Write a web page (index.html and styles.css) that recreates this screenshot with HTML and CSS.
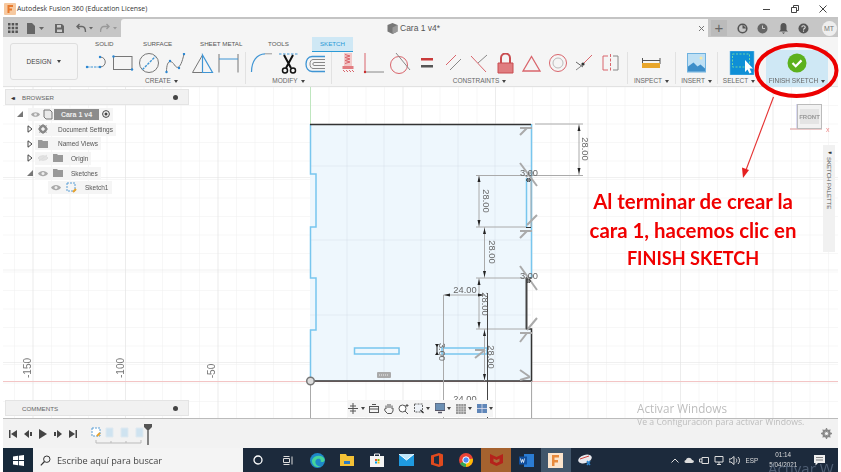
FILE: index.html
```html
<!DOCTYPE html>
<html lang="es">
<head>
<meta charset="utf-8">
<title>Autodesk Fusion 360</title>
<link rel="stylesheet" href="styles.css">
</head>
<body>
<div class="page">
  <header class="titlebar">
    <svg class="applogo" width="12" height="12" viewBox="0 0 12 12"><rect width="12" height="12" rx="1" fill="#f6c9a0"/><path d="M3.500 2h5.500v2H5.500v1.500H8v2H5.500V10h-2z" fill="#e8792b"/></svg>
    <span class="apptitle">Autodesk Fusion 360 (Education License)</span>
    <div class="winctl">
      <svg width="10" height="10" viewBox="0 0 10 10"><path d="M1 5.500h7" stroke="#444" fill="none"/></svg>
      <svg width="10" height="10" viewBox="0 0 10 10"><path d="M1.500 3.500h5v5h-5zM3.500 3.500v-2h5v5h-2" stroke="#444" fill="none"/></svg>
      <svg width="10" height="10" viewBox="0 0 10 10"><path d="M1.500 1.500l7 7M8.500 1.500l-7 7" stroke="#444" fill="none"/></svg>
    </div>
  </header>

  <div class="appbar">
    <div class="appbar-left">
      <svg width="10" height="10" viewBox="0 0 10 10"><path d="M0 0h2.500v2.500H0zM3.700 0h2.500v2.500H3.700zM7.400 0h2.500v2.500H7.400zM0 3.700h2.500v2.500H0zM3.700 3.700h2.500v2.500H3.700zM7.400 3.700h2.500v2.500H7.400zM0 7.400h2.500v2.500H0zM3.700 7.400h2.500v2.500H3.700zM7.400 7.400h2.500v2.500H7.400z" fill="#555"/></svg>
      <svg class="ab-file" width="17" height="11" viewBox="0 0 17 11"><path d="M0 0h5l3 3v8H0z" fill="#666"/><path d="M12 4h5l-2.500 3z" fill="#666"/></svg>
      <svg class="ab-save" width="9" height="9" viewBox="0 0 9 9"><path d="M0 0h7l2 2v7H0z" fill="#666"/><path d="M2 1h4v2.500H2zM2 5.500h5V8H2z" fill="#ccc"/></svg>
      <svg class="ab-undo" width="18" height="10" viewBox="0 0 18 10"><path d="M1 3.500h5c3 0 3.500 2 3.500 5.500M3.500 1L1 3.500 3.500 6" stroke="#666" stroke-width="1.400" fill="none"/><path d="M13 4h4l-2 2.500z" fill="#666"/></svg>
      <svg class="ab-redo" width="18" height="10" viewBox="0 0 18 10"><path d="M9 3.500H4C1 3.500.5 5.500.5 9M6.500 1L9 3.500 6.500 6" stroke="#999" stroke-width="1.400" fill="none"/><path d="M13 4h4l-2 2.500z" fill="#999"/></svg>
    </div>
    <div class="doctab">
      <svg width="11" height="11" viewBox="0 0 11 11"><path d="M5.500 0l5 2v6.500l-5 2.500-5-2.500V2z" fill="#777"/><path d="M5.500 4.500l5-2.500v6.500l-5 2.500z" fill="#999"/></svg>
      <span class="docname">Cara 1 v4*</span>
      <svg class="docclose" width="7" height="7" viewBox="0 0 7 7"><path d="M1 1l5 5M6 1L1 6" stroke="#777" fill="none"/></svg>
    </div>
    <div class="appbar-right">
      <span class="plus">+</span>
      <svg width="11" height="11" viewBox="0 0 11 11"><circle cx="5.500" cy="5.500" r="4.300" fill="none" stroke="#555" stroke-width="1.600"/><path d="M5.500 1.500l4 4h-4z" fill="#555"/></svg>
      <svg width="11" height="11" viewBox="0 0 11 11"><circle cx="5.500" cy="5.500" r="5" fill="#666"/><path d="M5.500 2.500v3h2.500" stroke="#ccc" fill="none"/></svg>
      <svg width="11" height="11" viewBox="0 0 11 11"><path d="M5.500 0c2 0 3 1.500 3 3.500V7l1.500 1.500H1L2.500 7V3.500C2.500 1.500 3.500 0 5.500 0zM4 9.500h3L5.500 11z" fill="#555"/></svg>
      <svg width="11" height="11" viewBox="0 0 11 11"><circle cx="5.500" cy="5.500" r="5" fill="#555"/><path d="M3.800 4.300c0-2 3.400-2 3.400 0 0 1.300-1.700 1.200-1.700 2.500M5.500 7.600v1.200" stroke="#ddd" stroke-width="1.100" fill="none"/></svg>
      <span class="avatar">MT</span>
    </div>
  </div>

  <div class="ribbon">
    <div class="design"><span>DESIGN</span><i class="caret"></i></div>
    <div class="ribbon-main">
      <nav class="tabs">
        <span class="tab t-solid">SOLID</span>
        <span class="tab t-surface">SURFACE</span>
        <span class="tab t-sheet">SHEET METAL</span>
        <span class="tab t-tools">TOOLS</span>
        <span class="tab tab-on">SKETCH</span>
      </nav>
      <div class="groups">
        <div class="group g-create">
          <svg width="167" height="24" viewBox="0 0 167 24">
            <g fill="none" stroke="#777">
              <path d="M22 4c7 0 7 10 0 10"/>
              <rect x="35.500" y="3.500" width="18.500" height="13"/>
              <circle cx="71" cy="10" r="9.500"/>
              <path d="M88.500 19c0-13 5-12 8-7 4 6 7 0 9.500-11"/>
              <path d="M114.500 19.500h10V2z"/>
              <path d="M141 1v18.500M160 1v18.500"/>
            </g>
            <g fill="none" stroke="#3f95d4">
              <path d="M9 14h13M9 14" stroke-dasharray="2.500 1"/>
              <path d="M64.500 16.500l13-13" stroke-dasharray="2.500 1" stroke-width="1.400"/>
              <path d="M124.500 2l10 17.500h-10z" stroke-width="1.200"/>
              <path d="M141 6h19"/>
            </g>
            <g fill="#2b86d1">
              <circle cx="9" cy="14" r="1.200"/><circle cx="22" cy="14" r="1.200"/><circle cx="22" cy="4" r="1.200"/>
              <circle cx="35.500" cy="3.500" r="1.200"/><circle cx="54" cy="16.500" r="1.200"/>
              <circle cx="88.500" cy="19" r="1.200"/><circle cx="92" cy="8" r="1.200"/><circle cx="101" cy="15" r="1.200"/><circle cx="106" cy="1" r="1.200"/>
            </g>
          </svg>
          <span class="glabel">CREATE<i class="caret"></i></span>
        </div>
        <div class="group g-modify">
          <svg width="85" height="24" viewBox="0 0 85 24">
            <path d="M5.500 19C5.500 8 11 1 19 .8" fill="none" stroke="#3f95d4" stroke-width="1.200"/><path d="M19 .8h7" stroke="#999" fill="none"/>
            <path d="M33 1h19" stroke="#3f95d4" stroke-dasharray="2.500 1.500" fill="none"/>
            <path d="M38 2l7 13M47 2l-7 13" stroke="#111" stroke-width="2" fill="none"/><circle cx="39" cy="17.500" r="2.500" fill="none" stroke="#111" stroke-width="1.500"/><circle cx="47" cy="17.500" r="2.500" fill="none" stroke="#111" stroke-width="1.500"/>
            <path d="M79 3.500H66c-8 0-8 15 0 15h13" fill="none" stroke="#3f95d4" stroke-width="1.300"/><path d="M79 6.500H67c-4 0-4 9 0 9h12M79 9.500H68c-1.500 0-1.500 3 0 3h11" fill="none" stroke="#888"/>
          </svg>
          <span class="glabel">MODIFY<i class="caret"></i></span>
        </div>
        <div class="group g-constraints">
          <svg width="295" height="24" viewBox="0 0 295 24">
            <path d="M12 0h8v13h-8z" fill="#f3c9c9"/><path d="M13 1.500l5 1.500-5 1.500 5 1.500-5 1.500 5 1.500-5 1.500" fill="none" stroke="#d9656c"/><rect x="10.500" y="13" width="11" height="3" fill="#e27c80"/><path d="M11 17l2 2M14 17l2 2M17 17l2 2M20 17l2 2" stroke="#d9656c" fill="none"/>
            <path d="M33 0v19" stroke="#d9656c" fill="none"/><path d="M33 19h19" stroke="#888" fill="none"/><circle cx="33" cy="19" r="1.200" fill="#c92f2f"/>
            <circle cx="67" cy="12" r="8.500" fill="none" stroke="#d9656c"/><path d="M64 0l14 17" stroke="#888" fill="none"/>
            <rect x="89" y="5" width="12" height="2.500" fill="#c93a3a"/><rect x="89" y="12" width="12" height="2.500" fill="#555"/>
            <path d="M114 12L124 2" stroke="#d9656c" fill="none"/><path d="M118 17L129 6" stroke="#888" fill="none"/>
            <path d="M155 2L146 10" stroke="#888" fill="none"/><path d="M139 3l15 16" stroke="#d9656c" fill="none"/>
            <path d="M166 10h15v10h-15z" fill="#e07d80" stroke="#c94c50"/><path d="M169 10V5c0-6 9-6 9 0v5" fill="none" stroke="#c94c50" stroke-width="2"/>
            <path d="M191 18l8.500-14.500L208 18z" fill="none" stroke="#d9656c" stroke-width="1.300"/>
            <circle cx="226" cy="10" r="8.500" fill="none" stroke="#d9656c"/><circle cx="226" cy="10" r="5" fill="none" stroke="#bbb"/>
            <path d="M244 9l7 5" stroke="#666" fill="none"/><path d="M244 17l8-6" stroke="#888" fill="none"/><path d="M252 10l8-8" stroke="#d9656c" fill="none"/><circle cx="251" cy="11" r="1.600" fill="#333"/>
            <path d="M276 3h-5v14h5" fill="none" stroke="#d9656c"/><path d="M281 3h5v14h-5" fill="none" stroke="#888"/><path d="M278.500 1v18" stroke="#d9656c" stroke-dasharray="3 1.500" fill="none"/>
          </svg>
          <span class="glabel">CONSTRAINTS<i class="caret"></i></span>
        </div>
        <div class="group g-inspect">
          <svg width="47" height="24" viewBox="0 0 47 24"><path d="M14.500 5v6M32 5v6M15 7.500h17" stroke="#555" fill="none"/><rect x="14" y="10" width="18" height="5" fill="#e8a62c"/></svg>
          <span class="glabel">INSPECT<i class="caret"></i></span>
        </div>
        <div class="group g-insert">
          <svg width="41" height="24" viewBox="0 0 41 24"><rect x="11.500" y=".5" width="18" height="18.500" fill="#bfe0f4" stroke="#6fb2df"/><path d="M12 18.500v-5l5.500-4 4 4 3-2 4.500 4v3z" fill="#3d8ec9"/><circle cx="25" cy="5" r="1.500" fill="#f6e9a6"/></svg>
          <span class="glabel">INSERT<i class="caret"></i></span>
        </div>
        <div class="group g-select">
          <svg width="41" height="24" viewBox="0 0 41 24"><rect x="11" y="0" width="24" height="24" fill="#0f8fd6" stroke="#7dc0e8" stroke-width=".6"/><rect x="13.500" y="3" width="17" height="13" fill="none" stroke="#6cd6a8" stroke-dasharray="2 1.500"/><path d="M26 9v12l2.500-2.500 2 4 2-1-2-4h3.500z" fill="#fff"/></svg>
          <span class="glabel">SELECT<i class="caret"></i></span>
        </div>
        <div class="group g-finish">
          <svg width="20" height="20" viewBox="0 0 20 20"><circle cx="10" cy="10" r="9.500" fill="#5cb11d"/><path d="M5.500 10l3.200 3.200 5.800-5.800" fill="none" stroke="#fff" stroke-width="2.200"/></svg>
          <span class="glabel">FINISH SKETCH<i class="caret"></i></span>
        </div>
      </div>
    </div>
  </div>

  <main class="canvas">
    <svg class="drawing" width="835" height="331" viewBox="3 87 835 331">
      <defs>
        <pattern id="minor" x="310" y="12.500" width="18.500" height="18.500" patternUnits="userSpaceOnUse"><path d="M0 0v18.500M0 0h18.500" fill="none" stroke="#f0f0f0"/></pattern>
        <pattern id="major" x="310" y="-8" width="92.500" height="92.500" patternUnits="userSpaceOnUse"><path d="M0 0v92.500M0 0h92.500" fill="none" stroke="#e2e2e2"/></pattern>
      </defs>
      <rect x="3" y="87" width="835" height="331" fill="url(#minor)"/>
      <rect x="3" y="87" width="835" height="331" fill="url(#major)"/>
      <path d="M310.500 87v294" stroke="#bfe6bf"/>
      <path d="M3 381.500h835" stroke="#f3c5c5"/>
      <path d="M310 124h221v154h-5v51h5v52H310z" fill="#eef7fd"/>
      <g fill="none" stroke="#ccd8e0" stroke-width="1">
        <path d="M347 124v257M384 124v257M421 124v257M458 124v257M495 124v257M310 166h221M310 240h221M310 315h221" stroke-opacity=".35"/>
      </g>
      <g fill="none" stroke="#78c6ee" stroke-width="1.500">
        <path d="M310.500 124v50h5.500v53h-5.500v51h5.500v52h-5.500v51"/>
        <path d="M531.500 124v154M526.500 178v49"/>
        <rect x="354.500" y="348" width="44.500" height="6"/>
        <rect x="442" y="348" width="45" height="6"/>
      </g>
      <path d="M310 124.500h221M310 381h221.500v-52h-5v-51h5" fill="none" stroke="#333" stroke-width="1.500"/>
      <path d="M526 227.500h5M526 175.500h5" fill="none" stroke="#333" stroke-width="1.200"/>
      <g fill="none" stroke="#aaa" stroke-width="2">
        <path d="M520 128h12M520 135l7-7"/>
        <path d="M520 163l17 23M526 177l5-5M527 225l10-10"/>
        <path d="M520 231h12M520 238l7-7"/>
        <path d="M520 266l17 24M527 330l10-12"/>
        <path d="M520 333h12M520 342l7-9"/>
        <path d="M520 370l10 7M520 380l10-3"/>
        <path d="M475 350h10M475 358l10-8"/>
      </g>
      <g fill="none" stroke="#aaa">
        <path d="M535 124h48M532 175.500h51M579 124v51"/>
        <path d="M476 175.500h50M476 227h50M479 176v51M531 176v51"/>
        <path d="M484.500 227v51M476 278h50M479 278v51M476 329h50M484.500 329v52"/>
        <path d="M443.500 295h41M443.500 295v123M310.500 381v37M531.500 381v37"/>
      </g>
      <path d="M487.500 293v125" stroke="#444" fill="none"/>
      <g fill="#222">
        <path d="M579 125l-1.500 6h3zM579 174l-1.500-6h3z"/>
        <path d="M479 176l-1.500 6h3zM479 226l-1.500-6h3z"/>
        <path d="M484.500 228l-1.500 6h3zM484.500 277l-1.500-6h3z"/>
        <path d="M479 279l-1.500 6h3zM479 328l-1.500-6h3z"/>
        <path d="M484.500 330l-1.500 6h3zM484.500 380l-1.500-6h3z"/>
        <path d="M444 295l6-1.500v3zM484 295l-6-1.500v3z"/>
        <path d="M526 180l4-2v4zM531 180l-4-2v4zM526 281l4-2v4zM531 281l-4-2v4z"/>
        <path d="M435 344h4l-2 3zM435 355h4l-2-3z"/>
      </g>
      <path d="M526 180h5M526 281h5M437 345v10" stroke="#222" fill="none"/>
      <path d="M526.500 278v51" stroke="#444" stroke-width="1.600" fill="none"/>
      <rect x="377" y="372" width="14" height="6" rx="1" fill="#aaa"/>
      <path d="M379 375h10" stroke="#eee" stroke-dasharray="1 1" fill="none"/>
      <circle cx="310.500" cy="381" r="3.800" fill="#ddd" stroke="#777" stroke-width="1.500"/>
      <g class="dim">
        <text x="582" y="149" transform="rotate(90 582 149)">28.00</text>
        <text x="529" y="176">3.00</text>
        <text x="483" y="201" transform="rotate(90 483 201)">28.00</text>
        <text x="489" y="252" transform="rotate(90 489 252)">28.00</text>
        <text x="529" y="279">3.00</text>
        <text x="465" y="293">24.00</text>
        <text x="482" y="304" transform="rotate(90 482 304)">28.00</text>
        <text x="488" y="357" transform="rotate(90 488 357)">28.00</text>
        <text x="439" y="352" transform="rotate(90 439 352)">3.00</text>
        <text x="465" y="402">24.00</text>
      </g>
      <g class="ruler">
        <text x="31" y="368" transform="rotate(-90 31 368)">-150</text>
        <text x="124" y="368" transform="rotate(-90 124 368)">-100</text>
        <text x="215" y="371" transform="rotate(-90 215 371)">-50</text>
      </g>
      <g>
        <path d="M797 104v25" stroke="#b7b7e8" fill="none"/>
        <path d="M790 129h32" stroke="#e5b9b9" stroke-width="1.500" fill="none"/>
        <rect x="797.500" y="104.500" width="24" height="24" fill="#f2f2f2" stroke="#bbb"/>
        <rect x="800" y="109" width="19" height="15" fill="#e4e4e4"/>
        <text class="cube" x="809.500" y="119">FRONT</text>
        <text class="cubex" x="826" y="132">x</text>
      </g>
    </svg>

    <section class="panel browser">
      <span class="collapse">◂◂</span><span class="panel-title">BROWSER</span><i class="dot"></i>
    </section>
    <ul class="tree">
      <li class="row r-root"><svg class="exp" width="8" height="8" viewBox="0 0 8 8"><path d="M7 1v6H1z" fill="#777"/></svg><span class="pill"><svg width="9" height="9" viewBox="0 0 10 7"><path d="M0 3.500C2 0 8 0 10 3.500 8 7 2 7 0 3.500z" fill="#aaa"/><circle cx="5" cy="3.500" r="1.500" fill="#eee"/></svg><svg class="cube-mini" width="10" height="11" viewBox="0 0 10 11"><path d="M1 1h6l2 2v7H3L1 8z" fill="#e9e9e9" stroke="#777"/></svg><b class="root-name">Cara 1 v4</b><svg class="radio" width="8" height="8" viewBox="0 0 8 8"><circle cx="4" cy="4" r="3.400" fill="none" stroke="#444"/><circle cx="4" cy="4" r="1.500" fill="#444"/></svg></span></li>
      <li class="row r-1"><svg class="exp" width="6" height="8" viewBox="0 0 6 8"><path d="M1 .800L5 4 1 7.200z" fill="#fff" stroke="#444"/></svg><span class="pill"><svg width="10" height="10" viewBox="0 0 10 10"><circle cx="5" cy="5" r="3.200" fill="none" stroke="#888" stroke-width="2"/><path d="M5 0v10M0 5h10M1.500 1.500l7 7M8.500 1.500l-7 7" stroke="#888"/><circle cx="5" cy="5" r="1.500" fill="#f2f2f2"/></svg><span class="node gap1">Document Settings</span></span></li>
      <li class="row r-1"><svg class="exp" width="6" height="8" viewBox="0 0 6 8"><path d="M1 .800L5 4 1 7.200z" fill="#fff" stroke="#444"/></svg><span class="pill"><svg width="10" height="8" viewBox="0 0 10 8"><path d="M0 0h4l1 1h5v7H0z" fill="#999"/></svg><span class="node gap1">Named Views</span></span></li>
      <li class="row r-1"><svg class="exp" width="6" height="8" viewBox="0 0 6 8"><path d="M1 .800L5 4 1 7.200z" fill="#fff" stroke="#444"/></svg><span class="pill"><svg width="10" height="8" viewBox="0 0 10 8"><path d="M0 4C2 1 8 1 10 4 8 7 2 7 0 4zM1 7l8-6" fill="#e2e2e2" stroke="#ddd"/></svg><svg class="gap2" width="10" height="8" viewBox="0 0 10 8"><path d="M0 0h4l1 1h5v7H0z" fill="#999"/></svg><span class="node gap3">Origin</span></span></li>
      <li class="row r-1"><svg class="exp" width="8" height="8" viewBox="0 0 8 8"><path d="M7 1v6H1z" fill="#777"/></svg><span class="pill"><svg width="10" height="7" viewBox="0 0 10 7"><path d="M0 3.500C2 0 8 0 10 3.500 8 7 2 7 0 3.500z" fill="#aaa"/><circle cx="5" cy="3.500" r="1.500" fill="#eee"/></svg><svg class="gap2" width="10" height="8" viewBox="0 0 10 8"><path d="M0 0h4l1 1h5v7H0z" fill="#999"/></svg><span class="node gap3">Sketches</span></span></li>
      <li class="row r-2"><span class="pill"><svg width="10" height="7" viewBox="0 0 10 7"><path d="M0 3.500C2 0 8 0 10 3.500 8 7 2 7 0 3.500z" fill="#aaa"/><circle cx="5" cy="3.500" r="1.500" fill="#eee"/></svg><svg class="gap2" width="11" height="11" viewBox="0 0 11 11"><rect x="1" y="1" width="8" height="8" fill="none" stroke="#5a9fd6" stroke-dasharray="2 1"/><path d="M7 10l3-3" stroke="#e8a22c" stroke-width="2"/></svg><span class="node gap3">Sketch1</span></span></li>
    </ul>

    <section class="panel comments">
      <span class="panel-title">COMMENTS</span><i class="dot"></i>
    </section>

    <aside class="palette"><em>◂◂</em><span>SKETCH PALETTE</span></aside>

    <div class="navbar">
      <svg width="10" height="11" viewBox="0 0 10 11"><path d="M5 0v11M0 5.500h10M2 3h6M2 8h6" stroke="#555" fill="none"/></svg><i class="caret"></i>
      <svg width="10" height="9" viewBox="0 0 10 9"><rect x=".5" y="2.500" width="9" height="6" fill="none" stroke="#555"/><path d="M3 .500h4M.5 5h9" stroke="#555" fill="none"/></svg>
      <svg width="10" height="11" viewBox="0 0 10 11"><path d="M2 6V2.500M4 5V1M6 5V1M8 6V2.500M2 6c-2-1-2 1 0 3l1.500 1.500h4L9 8V5" fill="none" stroke="#555"/></svg>
      <svg width="11" height="11" viewBox="0 0 11 11"><circle cx="4.500" cy="5.500" r="3.500" fill="#fff" stroke="#555"/><path d="M7 8l3 3M9 1v3M7.500 2.500h3" stroke="#555" fill="none"/></svg>
      <svg width="10" height="11" viewBox="0 0 10 11"><rect x=".5" y="1" width="8" height="8" fill="#eef2f7" stroke="#666" stroke-dasharray="2 1"/><path d="M6.500 7l3 3" stroke="#333" stroke-width="1.300"/></svg><i class="caret"></i>
      <svg width="10" height="11" viewBox="0 0 10 11"><rect width="10" height="7.500" fill="#6b8fb3" stroke="#556"/><path d="M3 9.500h4" stroke="#556" stroke-width="1.500"/></svg><i class="caret"></i>
      <svg width="10" height="10" viewBox="0 0 10 10"><rect width="10" height="10" fill="#999"/><path d="M2.500 0v10M5 0v10M7.500 0v10M0 2.500h10M0 5h10M0 7.500h10" stroke="#ddd" stroke-width=".5"/></svg><i class="caret"></i>
      <svg width="10" height="9" viewBox="0 0 10 9"><rect width="10" height="9" fill="#5f86b8"/><path d="M5 0v9M0 4.500h10" stroke="#dde" stroke-width=".8"/></svg><i class="caret"></i>
    </div>

    <div class="note">
      <p>Al terminar de crear la</p>
      <p>cara 1, hacemos clic en</p>
      <p class="note-caps">FINISH SKETCH</p>
    </div>
  </main>

  <div class="timeline">
    <div class="tl-controls">
      <svg width="8" height="8" viewBox="0 0 8 8"><path d="M0 0h1.500v8H0zM8 0v8L2 4z" fill="#444"/></svg>
      <svg width="8" height="8" viewBox="0 0 8 8"><path d="M5 0v8L0 4zM6 2h2v4H6z" fill="#444"/></svg>
      <svg width="8" height="10" viewBox="0 0 8 10"><path d="M0 0l8 5-8 5z" fill="#444"/></svg>
      <svg width="8" height="8" viewBox="0 0 8 8"><path d="M3 0v8l5-4zM0 2h2v4H0z" fill="#444"/></svg>
      <svg width="8" height="8" viewBox="0 0 8 8"><path d="M0 0v8l6-4zM6.500 0H8v8H6.500z" fill="#444"/></svg>
    </div>
    <svg class="tl-steps" width="62" height="24" viewBox="0 0 62 24">
      <rect x="1" y="4" width="8" height="8" fill="#fff" stroke="#5a9fd6" stroke-dasharray="2 1"/><path d="M6 12l3-3" stroke="#e8a22c" stroke-width="2"/>
      <path d="M15 4h7v9h-7zM30 4h7v9h-7zM45 4h7v9h-7z" fill="#cfe3f0" stroke="#dfe9f0"/>
      <path d="M5 16v3h45v-3M20 17v2M35 17v2" fill="none" stroke="#bbb"/>
      <path d="M53 0h8v3l-3 3h-2l-3-3z" fill="#555"/><path d="M57 4v17" stroke="#555" stroke-width="1.400"/>
    </svg>
    <svg class="tl-gear" width="11" height="11" viewBox="0 0 11 11"><circle cx="5.500" cy="5.500" r="3.300" fill="none" stroke="#888" stroke-width="2"/><path d="M5.500 0v11M0 5.500h11M1.600 1.600l7.800 7.800M9.400 1.600l-7.800 7.800" stroke="#888" stroke-width="1.300"/><circle cx="5.500" cy="5.500" r="1.600" fill="#f2f2f2"/></svg>
  </div>

  <footer class="taskbar">
    <div class="start"><svg width="11" height="11" viewBox="0 0 11 11"><path d="M0 1.500l5-.7V5H0zM5.800.7L11 0v5H5.800zM0 6h5v4.200l-5-.7zM5.800 6H11v5l-5.200-.7z" fill="#fff"/></svg></div>
    <div class="search">
      <svg width="11" height="11" viewBox="0 0 11 11"><circle cx="6.800" cy="4.200" r="3.200" fill="none" stroke="#333"/><path d="M4.500 6.500L.8 10.300" stroke="#333" stroke-width="1.200"/></svg>
      <span>Escribe aquí para buscar</span>
    </div>
    <div class="apps">
      <span class="slot"><svg width="10" height="10" viewBox="0 0 10 10"><circle cx="5" cy="5" r="4" fill="none" stroke="#fff" stroke-width="1.300"/></svg></span>
      <span class="slot"><svg width="10" height="9" viewBox="0 0 10 9"><path d="M.5.500h6M.5 8.500h6M.5 2.500h6v4h-6zM9 .5v8" fill="none" stroke="#ddd"/></svg></span>
      <span class="slot"><svg width="15" height="15" viewBox="0 0 15 15"><circle cx="7.500" cy="7.500" r="7.500" fill="#1e88c8"/><path d="M2 7c2-5 10-6 12.500-1 1 3-3 3.500-4 2.500C12 6 8 4.500 6 7c-2 3 1 6.500 5 6.500-4 2-9.500-1-9-6.500z" fill="#46d49a"/></svg></span>
      <span class="slot"><svg width="14" height="12" viewBox="0 0 14 12"><path d="M0 0h6l1 2h7v10H0z" fill="#f3c136"/><rect x="4" y="7" width="6" height="3" fill="#2c7cc4"/></svg></span>
      <span class="slot"><svg width="14" height="14" viewBox="0 0 14 14"><path d="M0 3h14v11H0z" fill="#f4f4f4"/><path d="M4.500 3V1h5v2" fill="none" stroke="#f4f4f4"/><path d="M5 6h2v2H5z" fill="#e8532b"/><path d="M7.500 6h2v2h-2z" fill="#7fba00"/><path d="M5 8.500h2v2H5z" fill="#00a4ef"/><path d="M7.500 8.500h2v2h-2z" fill="#ffb900"/></svg></span>
      <span class="slot"><svg width="15" height="12" viewBox="0 0 15 12"><rect width="15" height="12" fill="#1f9ae0"/><path d="M0 0l7.500 6L15 0" fill="#bfe6fa" stroke="#fff"/></svg></span>
      <span class="slot"><svg width="12" height="14" viewBox="0 0 12 14"><path d="M0 2.500L8 0l4 1.500v11L8 14 0 11.500z" fill="#e04a1e"/><path d="M3 4l5-1.500v9L3 10z" fill="#1d2d40"/></svg></span>
      <span class="slot"><svg width="14" height="14" viewBox="0 0 14 14"><circle cx="7" cy="7" r="7" fill="#ea4335"/><path d="M7 7L1 10.500A7 7 0 0 0 7 14z" fill="#34a853"/><path d="M7 7l6.800-1.500A7 7 0 0 1 7 14z" fill="#fbbc05"/><circle cx="7" cy="7" r="3.200" fill="#4a8af4" stroke="#fff"/></svg></span>
      <span class="slot slot-mc"><svg width="13" height="12" viewBox="0 0 13 12"><path d="M0 0l6.500 3L13 0v9l-6.500 3L0 9z" fill="#b5221b"/><path d="M3.500 4.500l3 1.500 3-1.500v3l-3 1.500-3-1.500z" fill="#a86a3b"/></svg></span>
      <span class="slot"><svg width="15" height="13" viewBox="0 0 15 13"><rect x="5" width="10" height="13" fill="#2b7cd3"/><rect y="2.500" width="8" height="8" fill="#114f9e"/><path d="M1.500 4.500l1 4 1-3 1 3 1-4" stroke="#fff" fill="none" stroke-width=".8"/></svg></span>
      <span class="slot slot-f"><svg width="15" height="15" viewBox="0 0 15 15"><rect width="15" height="15" fill="#fbe4cc"/><path d="M4 2h7v2.500H6.500v2.500H10v2.500H6.500V13H4z" fill="#e88a3c"/></svg></span>
      <span class="slot"><svg width="15" height="13" viewBox="0 0 15 13"><ellipse cx="7" cy="5" rx="7" ry="4" fill="#e8e8ee" transform="rotate(-18 7 5)"/><path d="M2 5l9-3" stroke="#d0443c"/><path d="M9 7l3 4M12 7l-3 4" stroke="#2b86d1" stroke-width="1.400"/></svg></span>
    </div>
    <div class="tray">
      <svg width="8" height="5" viewBox="0 0 8 5"><path d="M.5 4.500L4 1l3.500 3.500" fill="none" stroke="#ddd"/></svg>
      <svg width="10" height="6" viewBox="0 0 10 6"><path d="M2 6C0 6 0 3 2 3c.5-3 5-3 6 0 2.500 0 2.500 3 0 3z" fill="#ddd"/></svg>
      <svg width="10" height="7" viewBox="0 0 10 7"><path d="M3 .5h6.500v6H3zM3 2H.5v3H3" fill="none" stroke="#ddd"/></svg>
      <svg width="10" height="9" viewBox="0 0 10 9"><path d="M1 .5h8v5.500H1zM5 6v2.500M3 8.500h4" fill="none" stroke="#ddd"/></svg>
      <svg width="11" height="9" viewBox="0 0 11 9"><path d="M0 3h2l3-2.500v8L2 6H0zM7 2.500c1 1 1 3 0 4M9 1c2 2 2 5 0 7" fill="none" stroke="#ddd"/></svg>
      <span class="lang">ESP</span>
      <span class="clock"><span>01:14</span><span>5/04/2021</span></span>
      <svg class="notif" width="11" height="11" viewBox="0 0 11 11"><path d="M0 0h11v8H4L1.500 10.500V8H0z" fill="#eee"/><path d="M2 2.500h7M2 5h7" stroke="#555" stroke-width=".7"/></svg>
    </div>
  </footer>

  <div class="activate">
    <p class="act-1">Activar Windows</p>
    <p class="act-2">Ve a Configuración para activar Windows.</p>
  </div>
  <span class="ghost">Activar W</span>

  <svg class="callout" width="841" height="200" viewBox="0 0 841 200">
    <ellipse cx="796.500" cy="70.500" rx="40" ry="25.500" fill="none" stroke="#ec0000" stroke-width="4"/>
    <path d="M773.500 97L746 170" fill="none" stroke="#e53333" stroke-width="1.100"/>
    <path d="M743 178l-1-10.500 7 2.500z" fill="#e52020"/>
  </svg>
</div>
</body>
</html>
```

FILE: styles.css
```css
* { box-sizing: border-box; }
html, body { margin: 0; padding: 0; background: #fff; }
body { font-family: "Liberation Sans", Arial, sans-serif; overflow: hidden; }
p, ul { margin: 0; padding: 0; }
ul { list-style: none; }
svg { display: block; flex: none; }

.page {
  position: relative;
  width: 841px;
  height: 472px;
  overflow: hidden;
  padding-left: 3px;
  padding-right: 3px;
  display: flex;
  flex-direction: column;
  filter: blur(0.4px);
}

.titlebar {
  height: 17px;
  flex: none;
  display: flex;
  align-items: center;
  margin-left: -3px;
  padding-left: 4px;
  background: #fff;
}
.apptitle { margin-left: 1px; font-size: 6.900px; color: #333; font-family: "Open Sans", sans-serif; white-space: nowrap; }
.winctl { margin-left: auto; display: flex; gap: 18px; padding-right: 10px; }

.appbar {
  height: 20px;
  flex: none;
  display: flex;
  background: #c6c6c6;
  border-top: 2px solid #c4c4c4;
}
.appbar-left { width: 118px; display: flex; align-items: center; padding-left: 5px; }
.ab-file { margin-left: 9px; }
.ab-save { margin-left: 11px; }
.ab-undo { margin-left: 12px; }
.ab-redo { margin-left: 6px; }
.doctab {
  width: 587px;
  background: #f5f5f5;
  display: flex;
  align-items: center;
  padding-left: 266px;
  position: relative;
  border-radius: 3px 0 0 0;
}
.docname { margin-left: 2px; font-size: 8.500px; color: #555; }
.docclose { position: absolute; right: 3px; top: 6px; }
.appbar-right { flex: 1; display: flex; align-items: center; gap: 9.500px; padding-left: 3px; }
.plus { width: 16px; height: 16px; text-align: center; font-size: 15px; line-height: 15px; color: #666; background: #bbb; }
.avatar { width: 15px; height: 15px; margin-left: 3px; border-radius: 50%; background: #eee; font-size: 7px; line-height: 15px; text-align: center; color: #777; }

.ribbon {
  height: 50px;
  flex: none;
  display: flex;
  background: #f5f5f5;
  border-bottom: 1px solid #e2e2e2;
}
.design {
  width: 68px;
  height: 37px;
  margin: 6px 0 0 7px;
  border: 1px solid #dedede;
  border-radius: 3px;
  display: flex;
  align-items: center;
  justify-content: center;
  gap: 3px;
  font-size: 6.500px;
  color: #444;
}
.caret {
  display: inline-block;
  margin-left: 3px;
  width: 0;
  height: 0;
  vertical-align: middle;
  border-left: 2px solid transparent;
  border-right: 2px solid transparent;
  border-top: 3px solid #444;
}
.ribbon-main { width: 760px; display: flex; flex-direction: column; }
.tabs { height: 15px; display: flex; align-items: flex-start; font-size: 6.200px; color: #555; line-height: 14px; }
.tab { white-space: nowrap; }
.t-solid { margin-left: 17px; width: 48px; }
.t-surface { width: 57px; }
.t-sheet { width: 68px; }
.t-tools { width: 44px; }
.tab-on {
  width: 41px;
  height: 15px;
  text-align: center;
  color: #2b9ad6;
  background: #cfe8f5;
  border-bottom: 1px solid #2b9ad6;
}
.groups { display: flex; height: 35px; }
.group { display: flex; flex-direction: column; align-items: center; border-right: 1px solid #e2e2e2; height: 32px; }
.g-create { width: 168px; }
.g-modify { width: 86px; }
.g-constraints { width: 296px; }
.g-inspect { width: 48px; }
.g-insert { width: 42px; }
.g-select { width: 42px; border-right: 0; }
.g-finish { width: 62px; margin-left: 6px; margin-top: -2px; height: 37px; border-right: 0; background: #cfe8f5; }
.g-create svg, .g-modify svg, .g-constraints svg, .g-inspect svg, .g-insert svg { margin-top: 1px; }
.g-select svg { margin-top: -1px; margin-bottom: 2px; }
.g-finish svg { margin-top: 3px; margin-bottom: 4px; }
.glabel { margin-top: -1px; font-size: 6.500px; line-height: 9px; color: #666; white-space: nowrap; }

.canvas { flex: 1; min-height: 0; position: relative; background: #fff; border-bottom: 0; }
.drawing { position: absolute; left: 0; top: 0; }
.dim text { font-size: 9.300px; fill: #666; text-anchor: middle; font-family: "Liberation Sans", sans-serif; }
.ruler text { font-size: 10px; fill: #777; text-anchor: middle; }
.cube { font-size: 6px; fill: #999; text-anchor: middle; font-weight: bold; }
.cubex { font-size: 7px; fill: #e88; }

.panel {
  position: absolute;
  left: 2px;
  width: 184px;
  height: 16px;
  background: #f1f1f1;
  border: 1px solid #e4e4e4;
  display: flex;
  align-items: center;
  padding: 0 10px 0 5px;
  font-size: 6.200px;
  color: #666;
}
.browser { top: 2px; }
.comments { top: 313px; padding-left: 16px; }
.collapse { font-size: 6px; width: 11px; letter-spacing: -2px; color: #333; }
.dot { margin-left: auto; width: 5px; height: 5px; border-radius: 50%; background: #444; }

.tree { position: absolute; left: 13px; top: 20px; }
.row { display: flex; align-items: center; height: 14.700px; font-size: 6.500px; color: #555; }
.exp { margin-right: 3px; }
.pill { display: flex; align-items: center; background: #f5f5f5; height: 13px; padding: 0 3px; }
.r-root .exp { margin-right: 4px; }
.r-1 { padding-left: 10px; }
.r-1 .exp { width: 8px; margin-right: 1px; }
.r-2 { padding-left: 32px; }
.cube-mini { margin-left: 3px; }
.root-name { margin-left: 1px; width: 45px; height: 11px; line-height: 11px; text-align: center; background: #8c8c8c; color: #eee; font-size: 7px; }
.radio { margin-left: 3px; }
.gap1 { margin-left: 10px; }
.gap2 { margin-left: 5px; }
.gap3 { margin-left: 8px; }

.palette {
  position: absolute;
  right: 3px;
  top: 58px;
  width: 12px;
  height: 107px;
  background: #f1f1f1;
  display: flex;
  flex-direction: column;
  align-items: center;
  font-size: 6px;
  color: #555;
  padding-top: 4px;
}
.palette span { writing-mode: vertical-rl; margin-top: 2px; white-space: nowrap; }
.palette em { font-style: normal; font-size: 5px; line-height: 6px; letter-spacing: -1.500px; color: #333; }

.navbar {
  position: absolute;
  left: 345px;
  top: 313px;
  width: 145px;
  height: 17px;
  background: #f5f5f5;
  display: flex;
  align-items: center;
  justify-content: center;
  gap: 4.500px;
}
.navbar .caret { margin-left: -2px; }

.note {
  position: absolute;
  left: 537px;
  top: 100px;
  width: 306px;
  text-align: center;
  color: #f00000;
  font: bold 20.400px/28.500px Lato, "Open Sans", sans-serif;
}
.note-caps { font-size: 18.100px; }

.timeline {
  height: 30px;
  flex: none;
  background: #f2f2f2;
  border-top: 1px solid #bbb;
  display: flex;
  align-items: center;
  padding-left: 6px;
}
.tl-controls { display: flex; align-items: center; gap: 7px; }
.tl-steps { margin-left: 14px; margin-top: 5px; }
.tl-gear { margin-left: auto; margin-right: 6px; }

.taskbar { height: 24px; flex: none; display: flex; align-items: center; background: #1c2a3c; color: #fff; }
.start { flex: none; width: 30px; height: 24px; display: flex; align-items: center; justify-content: center; background: #17293a; }
.search {
  flex: none;
  width: 210px;
  height: 24px;
  background: #f4f4f4;
  display: flex;
  align-items: center;
  padding-left: 7px;
  gap: 6px;
  font-size: 9.200px;
  font-family: "Open Sans", sans-serif;
  color: #444;
}
.apps { flex: none; display: flex; height: 24px; }
.slot { width: 29.800px; height: 24px; display: flex; align-items: center; justify-content: center; }
.slot-mc { background: #a5622f; }
.slot-f { background: #41566b; }
.tray { flex: 1; min-width: 0; display: flex; align-items: center; gap: 5px; padding-left: 70px; }
.lang { font-size: 6.300px; color: #ddd; margin-left: 1px; }
.clock { display: flex; flex-direction: column; align-items: center; flex: none; width: 40px; font-size: 6.300px; line-height: 10px; color: #ddd; }
.notif { margin-left: 6px; }

.activate { position: absolute; left: 637px; top: 401px; color: #bdbdbd; font-family: "Open Sans", sans-serif; white-space: nowrap; }
.act-1 { font-size: 11.700px; line-height: 15px; }
.act-2 { font-size: 8.700px; line-height: 13px; margin-top: 0; }
.ghost { position: absolute; left: 768px; top: 458px; font-family: "Open Sans", sans-serif; font-size: 15px; color: #5a6a80; opacity: .8; white-space: nowrap; }
.callout { position: absolute; left: 0; top: 0; pointer-events: none; }
```
